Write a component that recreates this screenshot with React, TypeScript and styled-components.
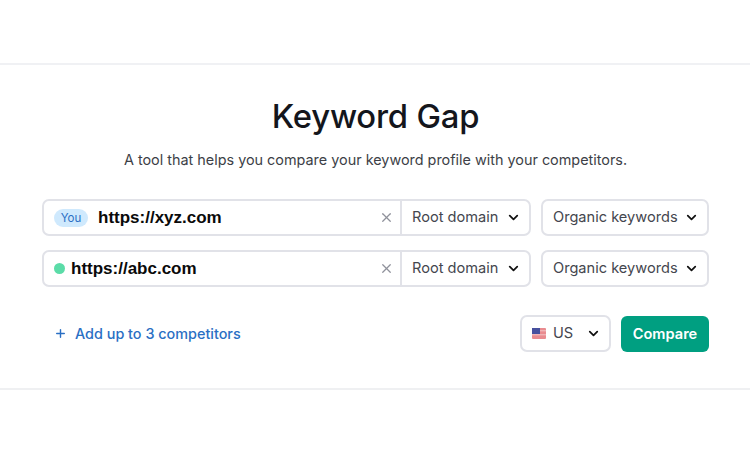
import { createGlobalStyle } from "styled-components";
import styled from "styled-components";
import { ChevronDown, Plus, X } from "lucide-react";

const GlobalStyle = createGlobalStyle`
  html, body { margin: 0; padding: 0; background: #fff; }
  body { font-family: Inter, "Liberation Sans", sans-serif; width: 750px; height: 450px; overflow: hidden; }
`;

const Page = styled.div`
  padding-top: 63px;
`;

const Panel = styled.section`
  border-top: 2px solid #f0f1f4;
  border-bottom: 2px solid #eff0f2;
  height: 327px;
  box-sizing: border-box;
  padding: 0 41px 0 42px;
  display: flex;
  flex-direction: column;
`;

const Title = styled.h1`
  margin: 26px 0 0;
  font-size: 32.8px;
  line-height: 50px;
  font-weight: 550;
  color: #14161c;
  text-align: center;
  letter-spacing: -0.2px;
`;

const Subtitle = styled.p`
  margin: 7px 0 0;
  font-size: 14.4px;
  line-height: 24px;
  color: #3d3f47;
  text-align: center;
`;

const Rows = styled.div`
  margin-top: 27px;
  display: flex;
  flex-direction: column;
  gap: 14px;
`;

const Row = styled.div`
  display: flex;
  gap: 10px;
`;

const Field = styled.div`
  width: 489px;
  height: 37px;
  box-sizing: border-box;
  border: 2px solid #e1e2e8;
  border-radius: 7px;
  display: flex;
  align-items: center;
  background: #fff;
`;

const FieldMain = styled.div`
  flex: 1;
  display: flex;
  align-items: center;
  padding-left: 10px;
  min-width: 0;
`;

const YouBadge = styled.span`
  width: 34px;
  height: 18px;
  border-radius: 9px;
  background: #cfe9fd;
  color: #2a6fc4;
  font-size: 11.5px;
  line-height: 18px;
  text-align: center;
  margin-right: 10px;
`;

const Dot = styled.span`
  width: 11px;
  height: 11px;
  border-radius: 50%;
  background: #5bdca8;
  margin-right: 6px;
`;

const Domain = styled.span`
  font-family: "Liberation Sans", Arial, sans-serif;
  font-size: 17px;
  font-weight: 700;
  color: #0a0a0a;
`;

const Clear = styled(X)`
  width: 15px;
  height: 15px;
  color: #8f919b;
  margin-right: 6px;
`;

const Scope = styled.div`
  width: 129px;
  height: 100%;
  box-sizing: border-box;
  border-left: 2px solid #e1e2e8;
  padding: 0 8px 0 10px;
  display: flex;
  align-items: center;
  justify-content: space-between;
`;

const Select = styled.div<{ $w: number }>`
  width: ${p => p.$w}px;
  height: 37px;
  box-sizing: border-box;
  border: 2px solid #e1e2e8;
  border-radius: 7px;
  padding: 0 8px 0 10px;
  display: flex;
  align-items: center;
  justify-content: space-between;
  background: #fff;
`;

const SelectText = styled.span`
  font-size: 14.6px;
  line-height: 20px;
  margin-top: -2px;
  color: #44464e;
  white-space: nowrap;
`;

const Chevron = styled(ChevronDown)`
  width: 15px;
  height: 15px;
  color: #111;
  stroke-width: 2.8;
  flex-shrink: 0;
`;

const Footer = styled.div`
  margin-top: 28px;
  display: flex;
  align-items: center;
`;

const AddLink = styled.a`
  margin-left: 12px;
  display: flex;
  align-items: center;
  gap: 8px;
  color: #2a6fc4;
  font-size: 14.4px;
  font-weight: 500;
`;

const AddIcon = styled(Plus)`
  width: 13px;
  height: 13px;
  stroke-width: 2.6;
`;

const Spacer = styled.div`
  flex: 1;
`;

const CountrySelect = styled(Select)`
  margin-right: 10px;
`;

const FlagWrap = styled.span`
  display: flex;
  align-items: center;
  gap: 7px;
`;

const CompareButton = styled.button`
  width: 88px;
  height: 36px;
  border: 0;
  border-radius: 6px;
  background: #009f81;
  color: #fff;
  font-family: inherit;
  font-size: 14.6px;
  font-weight: 600;
  padding: 0;
`;

const Flag = () => (
  <svg width="14" height="11" viewBox="0 0 14 11">
    <rect width="14" height="11" rx="1" fill="#e98b8f" />
    <rect y="2" width="14" height="1.4" fill="#f0b4b6" />
    <rect y="6" width="14" height="1.4" fill="#f0b4b6" />
    <rect width="8" height="6" fill="#47509e" />
  </svg>
);

const rows = [
  { url: "https://xyz.com", you: true },
  { url: "https://abc.com", you: false },
];

export default function App() {
  return (
    <Page>
      <GlobalStyle />
      <Panel>
        <Title>Keyword Gap</Title>
        <Subtitle>A tool that helps you compare your keyword profile with your competitors.</Subtitle>
        <Rows>
          {rows.map(r => (
            <Row key={r.url}>
              <Field>
                <FieldMain>
                  {r.you ? <YouBadge>You</YouBadge> : <Dot />}
                  <Domain>{r.url}</Domain>
                </FieldMain>
                <Clear />
                <Scope>
                  <SelectText>Root domain</SelectText>
                  <Chevron />
                </Scope>
              </Field>
              <Select $w={168}>
                <SelectText>Organic keywords</SelectText>
                <Chevron />
              </Select>
            </Row>
          ))}
        </Rows>
        <Footer>
          <AddLink>
            <AddIcon />
            Add up to 3 competitors
          </AddLink>
          <Spacer />
          <CountrySelect $w={91}>
            <FlagWrap>
              <Flag />
              <SelectText>US</SelectText>
            </FlagWrap>
            <Chevron />
          </CountrySelect>
          <CompareButton>Compare</CompareButton>
        </Footer>
      </Panel>
    </Page>
  );
}
